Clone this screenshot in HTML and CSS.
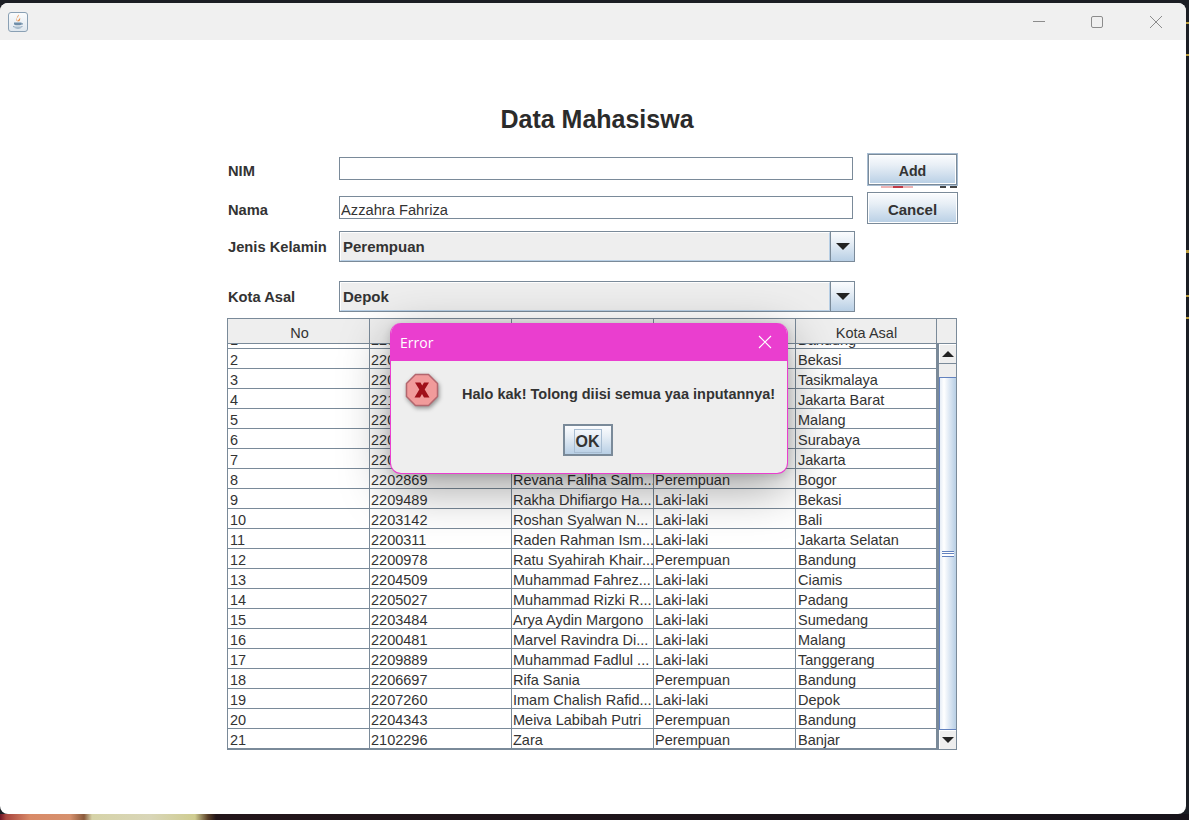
FILE: index.html
```html
<!DOCTYPE html>
<html lang="id">
<head>
<meta charset="utf-8">
<title>Data Mahasiswa</title>
<link rel="stylesheet" href="styles.css">
</head>
<body>
<div class="window">
  <header class="titlebar">
    <div class="app-icon">
      <svg width="18" height="18" viewBox="0 0 18 18">
        <path d="M9.500 1.500c1 2-2.200 3-1.600 5 .2.700.6 1.200 1 1.700-.2-1.200 2.800-2.300 1.900-4.200.9 1.600.3 3-.5 4.200H8c-1.400-2 .4-4.500 1.500-6.700z" fill="#e8873a"/>
        <path d="M5 9.600h7.500v1.100c0 1-1 1.500-3.700 1.500S5 11.700 5 10.700z" fill="#6f8ea8"/>
        <path d="M12.500 10c1.600-.3 2 1.400.2 2l-.6-.4c1-.3.900-1-.1-.8z" fill="#6f8ea8"/>
        <path d="M4 13.200c2.500.8 7 .8 9.500 0v.7c-2.500.9-7 .9-9.500 0zM5.500 15.200c2 .5 5 .5 7 0-1.500 1-5.500 1-7 0z" fill="#6f8ea8"/>
      </svg>
    </div>
    <div class="win-controls">
      <svg class="ctl" width="12" height="12" viewBox="0 0 12 12"><path d="M0 5.500h12" stroke="#8c8c8c" fill="none"/></svg>
      <svg class="ctl" width="12" height="12" viewBox="0 0 12 12"><rect x=".5" y=".5" width="11" height="11" rx="1.500" stroke="#8c8c8c" fill="none"/></svg>
      <svg class="ctl ctl-close" width="12" height="12" viewBox="0 0 12 12"><path d="M0 0l12 12M12 0L0 12" stroke="#8c8c8c" fill="none"/></svg>
    </div>
  </header>

  <main class="content">
    <h1 class="heading">Data Mahasiswa</h1>
    <form class="form">
      <label class="label label-text">NIM</label>
      <input class="text-input" type="text" value="">
      <span class="spacer"></span>
      <div class="add-wrap"><button type="button" class="btn btn-focus">Add</button><span class="add-artifact"></span></div>

      <label class="label label-text">Nama</label>
      <input class="text-input" type="text" value="Azzahra Fahriza">
      <span class="spacer"></span>
      <button type="button" class="btn">Cancel</button>

      <label class="label">Jenis Kelamin</label>
      <div class="combo"><span class="combo-value">Perempuan</span><span class="combo-arrow"><svg width="14" height="7" viewBox="0 0 14 7"><path d="M0 0h14L7 7z" fill="#222"/></svg></span></div>
      <span class="spacer"></span>
      <span class="spacer"></span>

      <label class="label">Kota Asal</label>
      <div class="combo"><span class="combo-value">Depok</span><span class="combo-arrow"><svg width="14" height="7" viewBox="0 0 14 7"><path d="M0 0h14L7 7z" fill="#222"/></svg></span></div>
    </form>

    <div class="table-frame">
      <div class="table-main">
        <div class="table-head">
          <div class="th th-first">No</div><div class="th">NIM</div><div class="th">Nama</div><div class="th">Jenis Kelamin</div><div class="th th-last">Kota Asal</div>
        </div>
        <div class="table-view">
          <table class="grid">
            <tbody>
              <tr><td>1</td><td>220</td><td></td><td></td><td>Bandung</td></tr>
              <tr><td>2</td><td>220</td><td></td><td></td><td>Bekasi</td></tr>
              <tr><td>3</td><td>220</td><td></td><td></td><td>Tasikmalaya</td></tr>
              <tr><td>4</td><td>221</td><td></td><td></td><td>Jakarta Barat</td></tr>
              <tr><td>5</td><td>220</td><td></td><td></td><td>Malang</td></tr>
              <tr><td>6</td><td>220</td><td></td><td></td><td>Surabaya</td></tr>
              <tr><td>7</td><td>220</td><td></td><td></td><td>Jakarta</td></tr>
              <tr><td>8</td><td>2202869</td><td>Revana Faliha Salm...</td><td>Perempuan</td><td>Bogor</td></tr>
              <tr><td>9</td><td>2209489</td><td>Rakha Dhifiargo Ha...</td><td>Laki-laki</td><td>Bekasi</td></tr>
              <tr><td>10</td><td>2203142</td><td>Roshan Syalwan N...</td><td>Laki-laki</td><td>Bali</td></tr>
              <tr><td>11</td><td>2200311</td><td>Raden Rahman Ism...</td><td>Laki-laki</td><td>Jakarta Selatan</td></tr>
              <tr><td>12</td><td>2200978</td><td>Ratu Syahirah Khair...</td><td>Perempuan</td><td>Bandung</td></tr>
              <tr><td>13</td><td>2204509</td><td>Muhammad Fahrez...</td><td>Laki-laki</td><td>Ciamis</td></tr>
              <tr><td>14</td><td>2205027</td><td>Muhammad Rizki R...</td><td>Laki-laki</td><td>Padang</td></tr>
              <tr><td>15</td><td>2203484</td><td>Arya Aydin Margono</td><td>Laki-laki</td><td>Sumedang</td></tr>
              <tr><td>16</td><td>2200481</td><td>Marvel Ravindra Di...</td><td>Laki-laki</td><td>Malang</td></tr>
              <tr><td>17</td><td>2209889</td><td>Muhammad Fadlul ...</td><td>Laki-laki</td><td>Tanggerang</td></tr>
              <tr><td>18</td><td>2206697</td><td>Rifa Sania</td><td>Perempuan</td><td>Bandung</td></tr>
              <tr><td>19</td><td>2207260</td><td>Imam Chalish Rafid...</td><td>Laki-laki</td><td>Depok</td></tr>
              <tr><td>20</td><td>2204343</td><td>Meiva Labibah Putri</td><td>Perempuan</td><td>Bandung</td></tr>
              <tr><td>21</td><td>2102296</td><td>Zara</td><td>Perempuan</td><td>Banjar</td></tr>
            </tbody>
          </table>
        </div>
      </div>
      <div class="scroll-col">
        <div class="scroll-corner"></div>
        <div class="scroll-btn"><svg width="12" height="6" viewBox="0 0 12 6"><path d="M6 0l6 6H0z" fill="#222"/></svg></div>
        <div class="scroll-track">
          <div class="scroll-thumb"><span class="grip"></span></div>
        </div>
        <div class="scroll-btn scroll-btn-down"><svg width="12" height="6" viewBox="0 0 12 6"><path d="M0 0h12L6 6z" fill="#222"/></svg></div>
      </div>
    </div>
  </main>

  <section class="dialog" role="alertdialog">
    <div class="dialog-title">
      <span class="dialog-caption">Error</span>
      <svg class="dialog-close" width="14" height="14" viewBox="0 0 14 14"><path d="M1 1l12 12M13 1L1 13" stroke="#fff" stroke-width="1.100" fill="none"/></svg>
    </div>
    <div class="dialog-body">
      <div class="dialog-row">
        <svg class="err-icon" width="34" height="34" viewBox="0 0 34 34">
          <path d="M10.500 1.500h13l9 9v13l-9 9h-13l-9-9v-13z" fill="#f19b9b" stroke="#b3666e" stroke-width="1.500"/>
          <path d="M10 9.500h5.500l1.700 3L19 9.500h5l-4.300 7 4.800 8H19l-2-3.400-2 3.400H9.500l4.800-8z" fill="#a0101a"/>
        </svg>
        <p class="dialog-msg">Halo kak! Tolong diisi semua yaa inputannya!</p>
      </div>
      <div class="dialog-actions">
        <button type="button" class="ok-btn"><span class="ok-focus">OK</span></button>
      </div>
    </div>
  </section>
</div>
</body>
</html>
```

FILE: styles.css
```css
* { box-sizing: border-box; }
html, body { height: 100%; }
body {
  margin: 0;
  overflow: hidden;
  font-family: "Liberation Sans", Arial, sans-serif;
  color: #333;
  background-color: #1b1e24;
  background-image:
    linear-gradient(90deg, #6e1526 0, #a8453f 6px, #d98a68 30px, #d6916e 70px, #8a5a3c 84px, #d6d3a8 92px, #d9d6b8 150px, #cfcc90 195px, #5a4028 208px, #23161a 216px, #17131a 100%),
    linear-gradient(#b79a3c, #b79a3c),
    linear-gradient(#b79a3c, #b79a3c),
    linear-gradient(#b79a3c, #b79a3c),
    linear-gradient(#b79a3c, #b79a3c),
    linear-gradient(#b79a3c, #b79a3c);
  background-size: 100% 6px, 3px 2px, 3px 2px, 3px 3px, 3px 2px, 3px 2px;
  background-position: 0 100%, 100% 22px, 100% 54px, 100% 250px, 100% 295px, 100% 317px;
  background-repeat: no-repeat;
}

.window {
  position: relative;
  width: 1186px;
  height: 811px;
  margin-top: 3px;
  background: #fff;
  border-radius: 8px;
  overflow: hidden;
}

.titlebar {
  height: 37px;
  background: #f0f0f0;
  display: flex;
  align-items: center;
  justify-content: space-between;
  padding: 0 24px 0 8px;
}
.app-icon {
  width: 20px;
  height: 20px;
  margin-top: 1px;
  display: flex;
  align-items: center;
  justify-content: center;
  border: 1px solid #8aa0b4;
  border-radius: 3px;
  background: linear-gradient(#fbfcfd, #dfe7ee);
}
.win-controls { display: flex; gap: 46px; align-items: center; }
.ctl { display: block; }
.ctl-close { margin-left: 1px; }

.content { padding: 64px 0 0 227px; }
.heading {
  width: 740px;
  margin: 0 0 19px;
  font-size: 25px;
  line-height: 30px;
  font-weight: 700;
  text-align: center;
  color: #2b2b2b;
}

.form {
  display: grid;
  grid-template-columns: 112px 514px 14px 91px;
  grid-template-rows: 39px 39px 50px 37px;
  align-items: start;
}
.label {
  padding-left: 1px;
  font-size: 14.7px;
  font-weight: 700;
  line-height: 33px;
  color: #333;
}
.label-text { margin-top: 2px; }
.text-input {
  width: 514px;
  height: 23px;
  margin-top: 4px;
  padding: 5px 1px 0;
  border: 1px solid #7a8a99;
  background: #fff;
  font: 14.7px "Liberation Sans", Arial, sans-serif;
  color: #333;
  outline: none;
}
.add-wrap { position: relative; }
.btn {
  display: block;
  width: 91px;
  height: 32px;
  padding: 3px 0 0;
  border: 1px solid #7a8a99;
  background: linear-gradient(#fbfcfe 0, #e8eff6 35%, #b8cfe5 100%);
  box-shadow: inset 0 0 0 1px #fff;
  font: 700 15px "Liberation Sans", Arial, sans-serif;
  color: #333;
}
.btn-focus {
  height: 33px;
  border: 2px solid #7a8a99;
  outline: 1px solid #a8bdd2;
  outline-offset: -1px;
  padding-top: 2px;
  font-size: 14.200px;
}
.add-artifact {
  position: absolute;
  left: 14px;
  right: 1px;
  top: 33px;
  height: 2px;
  background: linear-gradient(90deg, #f0b4b4 0 16%, #c23a46 16% 29%, #f0b4b4 29% 42%, #fff 42% 78%, #444 78% 86%, #fff 86% 91%, #444 91% 100%);
}

.combo {
  display: flex;
  width: 516px;
  height: 31px;
  border: 1px solid #7a8a99;
  background: #eeeeee;
}
.combo-value {
  flex: 1;
  padding-left: 2px;
  font-size: 15px;
  font-weight: 700;
  line-height: 27px;
  color: #333;
  border: 1px solid;
  border-color: #fff #b8cfe5 #b8cfe5 #fff;
}
.combo-arrow {
  width: 24px;
  display: flex;
  align-items: center;
  justify-content: center;
  border-left: 1px solid #7a8a99;
  background: linear-gradient(#fbfcfe 0, #e8eff6 35%, #b8cfe5 100%);
}

.table-frame {
  display: flex;
  width: 730px;
  height: 432px;
  border: 1px solid #7a8a99;
  background: #fff;
}
.table-main { width: 709px; flex: none; }
.table-head {
  display: grid;
  grid-template-columns: repeat(4, 142px) 141px;
  height: 25px;
  border-bottom: 1px solid #7a8a99;
  background: #eeeeee;
}
.th {
  border-right: 1px solid #7a8a99;
  font-size: 14.500px;
  line-height: 28px;
  text-align: center;
  color: #333;
}
.th-first { padding-left: 2px; }
.th-last { padding-left: 1px; }
.table-view { height: 405px; overflow: hidden; }
.grid {
  width: 709px;
  margin-top: -15px;
  table-layout: fixed;
  border-collapse: separate;
  border-spacing: 0;
}
.grid td {
  width: 142px;
  height: 20px;
  padding: 3px 0 0 2px;
  border-right: 1px solid #7a8a99;
  border-bottom: 1px solid #7a8a99;
  font-size: 14.500px;
  line-height: 16px;
  white-space: nowrap;
  overflow: hidden;
  color: #333;
}
.grid td:nth-child(2) { padding-left: 1px; }
.grid td:nth-child(3), .grid td:nth-child(4) { padding-left: 1px; }
.grid td:last-child { width: 141px; }

.scroll-col {
  flex: 1;
  display: flex;
  flex-direction: column;
  background: #eeeeee;
}
.scroll-corner { height: 25px; border-bottom: 1px solid #7a8a99; }
.scroll-btn {
  height: 20px;
  display: flex;
  align-items: center;
  justify-content: center;
  background: #eeeeee;
  border-left: 2px solid #7a8a99;
  border-bottom: 1px solid #7a8a99;
  box-shadow: inset 1px 1px 0 #fff;
}
.scroll-btn-down { border-bottom: 0; height: 19px; }
.scroll-track { flex: 1; display: flex; border-left: 2px solid #7a8a99; padding-top: 13px; }
.scroll-thumb {
  flex: 1;
  display: flex;
  align-items: center;
  justify-content: center;
  border-left: 1px solid #6382bf;
  border-top: 1px solid #6382bf;
  border-bottom: 1px solid #6382bf;
  background: linear-gradient(90deg, #e6edf6 0, #ffffff 25%, #dce7f3 60%, #b8cfe5 100%);
}
.grip {
  width: 12px;
  height: 6px;
  border-top: 1px solid #6382bf;
  border-bottom: 1px solid #6382bf;
  background: linear-gradient(#fff 0 1px, #6382bf 1px 2px, #fff 2px);
}

.dialog {
  position: absolute;
  left: 390px;
  top: 320px;
  width: 398px;
  height: 151px;
  border-radius: 11px;
  overflow: hidden;
  border: 1px solid #ea3ecf;
  border-top: 0;
  background: #eeeeee;
  box-shadow: 0 14px 50px rgba(0, 0, 0, .38), 0 2px 8px rgba(0, 0, 0, .15);
}
.dialog-title {
  height: 38px;
  margin: 0 -1px;
  padding: 0 16px 0 10px;
  display: flex;
  align-items: center;
  justify-content: space-between;
  background: #ea3ecf;
}
.dialog-caption {
  font-family: "Open Sans", "Noto Sans", sans-serif;
  font-size: 14px;
  color: #fff;
}
.dialog-close { display: block; }
.dialog-row {
  display: flex;
  align-items: center;
  height: 63px;
  padding-left: 14px;
}
.err-icon { flex: none; display: block; margin-top: -5px; filter: drop-shadow(1px 2px 2px rgba(0, 0, 0, .4)); }
.dialog-msg {
  margin: 2px 0 0 23px;
  font-size: 14.500px;
  font-weight: 700;
  white-space: nowrap;
  color: #333;
}
.dialog-actions { display: flex; justify-content: center; padding: 0 3px 0 0; }
.ok-btn {
  width: 50px;
  height: 32px;
  padding: 2px 0 0;
  display: flex;
  align-items: center;
  justify-content: center;
  border: 2px solid #7a8a99;
  background: linear-gradient(#fbfcfe 0, #e8eff6 35%, #b8cfe5 100%);
  font: 700 16px "Liberation Sans", Arial, sans-serif;
  color: #333;
}
.ok-focus {
  display: block;
  padding: 2px 1px 0;
  line-height: 20px;
  outline: 1px solid #a8bdd2;
}
```
